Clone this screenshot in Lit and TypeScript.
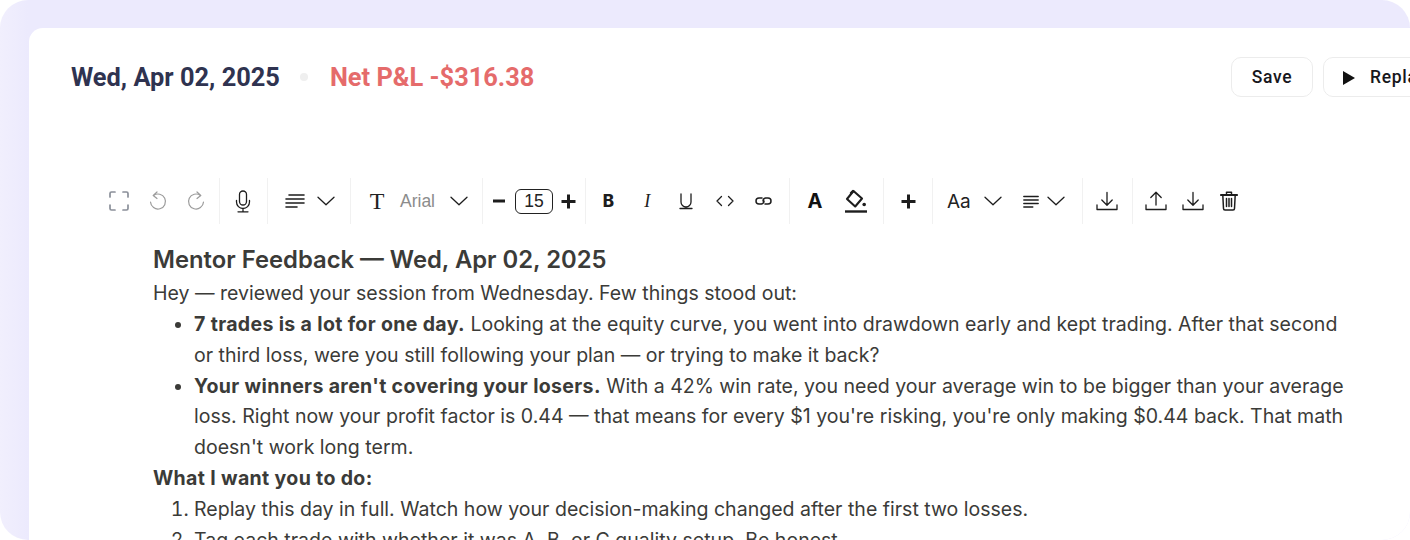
import { LitElement, html, css, svg } from "lit";
import { customElement } from "lit/decorators.js";

const ic = (w: number, h: number, vb: string, body: unknown, cls = "") =>
  html`<svg class="${cls}" width="${w}" height="${h}" viewBox="${vb}" fill="none" stroke="currentColor" stroke-width="1.5" stroke-linecap="round" stroke-linejoin="round">${body}</svg>`;

const chevron = () => ic(18, 10, "0 0 18 10", svg`<path d="M1 1.200 9 8.800 17 1.200" stroke-width="1.300"/>`);
const download = () =>
  ic(22, 22, "0 0 22 22", svg`<path d="M11 2.500v12.500M5.800 10 11 15.200 16.200 10M1 15v4.500h20V15" stroke-width="1.300"/>`);
const upload = () =>
  ic(22, 22, "0 0 22 22", svg`<path d="M11 15V2.500M5.800 7.500 11 2.300l5.200 5.200M1 15v4.500h20V15" stroke-width="1.300"/>`);
const alignLeft = (w: number) =>
  ic(w, 16, "0 0 20 16", svg`<path d="M4 2h15M1 6h18M1 10h18M1 14h11" stroke-width="1.600"/>`);
const plus = () =>
  ic(15, 15, "0 0 15 15", svg`<path d="M7.500 .5v14M.5 7.500h14" stroke-width="3" stroke-linecap="butt"/>`);

@customElement("app-root")
export class AppRoot extends LitElement {
  static styles = css`
    :host { display: block; width: 1410px; height: 540px; overflow: hidden; background: #fff; }
    .frame { height: 540px; box-sizing: border-box; padding: 28px 0 0 29px; border-radius: 28px; overflow: hidden;
      background: linear-gradient(90deg, #f1effd 0, #eceafd 28px, #eceafd 100%); }
    .card { width: 1451px; height: 620px; box-sizing: border-box; background: #fff; border-radius: 14px 14px 0 0; padding: 29px 42px 0; }
    .head { display: flex; align-items: center; height: 40px; }
    .date { font: 700 25.400px/40px Roboto, sans-serif; color: #2f3350; }
    .dot { width: 8px; height: 8px; border-radius: 50%; background: #efefef; margin: 0 22px 0 20px; }
    .pnl { font: 700 25.400px/40px Roboto, sans-serif; color: #e56b6b; flex: 1; }
    .btn { height: 40px; box-sizing: border-box; padding-top: 1px; border: 1px solid #ececec; border-radius: 10px; display: flex; align-items: center; font: 500 17.500px/1 Roboto, sans-serif; letter-spacing: .7px; color: #17171c; background: #fff; }
    .save { width: 82px; margin-right: 10px; justify-content: center; }
    .replay { width: 115px; padding-left: 19px; gap: 15px; }
    .tri { width: 0; height: 0; border-left: 12px solid #111; border-top: 7px solid transparent; border-bottom: 7px solid transparent; }

    .bar { display: flex; height: 46px; margin: 81px 0 0 29px; color: #1d1d1d; }
    .g { display: flex; align-items: center; box-sizing: border-box; border-right: 1px solid #f1f1f1; }
    .ib { display: flex; align-items: center; justify-content: center; flex: none; }
    .g1 { width: 120px; } .g1 .ib { width: 38.500px; }
    .g2 { width: 48px; padding-left: 15px; }
    .g3 { width: 83px; padding-left: 17px; gap: 12px; }
    .g4 { width: 132px; padding-left: 18px; }
    .g5 { width: 103px; padding-left: 10px; }
    .g6 { width: 204px; padding-left: 3px; } .g6 .ib { width: 38.800px; }
    .g7 { width: 94px; padding-left: 16px; gap: 20px; }
    .g8 { width: 49px; justify-content: center; }
    .g9 { width: 150px; padding-left: 14px; }
    .g10 { width: 50px; padding-left: 13px; }
    .g11 { border-right: 0; padding-left: 5px; }
    .g11 .ib { width: 36.500px; }
    .muted { color: #9b9b9b; }
    .gray { color: #8a8f99; }
    .t { font: 400 24px/1 "Liberation Serif", serif; color: #222; width: 16px; text-align: center; }
    .arial { font: 400 17.500px/1 "Liberation Sans", sans-serif; color: #8c8c8c; margin: 2px 14px 0 15px; width: 36px; }
    .size { width: 38px; height: 25px; box-sizing: border-box; border: 1px solid #222; border-radius: 6px; font: 400 17.500px/23px "Liberation Sans", sans-serif; color: #222; text-align: center; margin: 0 8px 0 10px; }
    .aa { font: 400 19px/1 Inter, sans-serif; color: #222; width: 24px; margin-right: 13px; }
    .al2 { margin: 0 8px 0 21px; }
    .B { font: 800 17px/1 Inter, sans-serif; }
    .I { font: italic 400 18px/1 "Liberation Serif", serif; }
    .A { font: 700 20px/1 Inter, sans-serif; color: #111; width: 18px; text-align: center; }

    .doc { margin: 18px 0 0 82px; width: 1202px; font: 400 19.550px/30.900px Inter, sans-serif; color: #3b3b38; }
    .doc h2 { margin: 0 0 .3px; font: 600 23.800px/35.500px Inter, sans-serif; color: #3b3b38; }
    .doc p { margin: 0; }
    .doc b { font-weight: 700; letter-spacing: .34px; }
    .doc ul, .doc ol { margin: 0; padding: 0 0 0 41px; }
  `;

  render() {
    return html`<div class="frame"><div class="card">
      <div class="head">
        <span class="date">Wed, Apr 02, 2025</span><span class="dot"></span><span class="pnl">Net P&amp;L -$316.38</span>
        <div class="btn save">Save</div>
        <div class="btn replay"><span class="tri"></span>Replay</div>
      </div>
      <div class="bar">
        <div class="g g1">
          <span class="ib gray">${ic(20, 20, "0 0 20 20", svg`<path d="M1 6V2.500C1 1.700 1.700 1 2.500 1H6M14 1h3.500C18.300 1 19 1.700 19 2.500V6M19 14v3.500c0 .8-.7 1.500-1.500 1.500H14M6 19H2.500C1.700 19 1 18.300 1 17.500V14" stroke-width="1.700"/>`)}</span>
          <span class="ib muted">${ic(18, 20, "0 0 18 20", svg`<path d="M4.500 4.500A7.500 7.500 0 1 1 1.500 11M8 1 4.200 4.500 8 7.500" stroke-width="1.200"/>`)}</span>
          <span class="ib muted">${ic(18, 20, "0 0 18 20", svg`<path d="M13.500 4.500A7.500 7.500 0 1 0 16.500 11M10 1l3.800 3.500L10 7.500" stroke-width="1.200"/>`)}</span>
        </div>
        <div class="g g2"><span class="ib">${ic(16, 23, "0 0 16 23", svg`<rect x="4.500" y="1" width="7" height="14" rx="3.500" stroke-width="1.300"/><path d="M1.500 10.500v1.500a6.500 6.500 0 0 0 13 0v-1.500M8 18.500v3M3 21.800h10" stroke-width="1.300"/>`)}</span></div>
        <div class="g g3"><span class="ib">${alignLeft(20)}</span><span class="ib">${chevron()}</span></div>
        <div class="g g4"><span class="t">T</span><span class="arial">Arial</span><span class="ib">${chevron()}</span></div>
        <div class="g g5"><span class="ib">${ic(12, 12, "0 0 12 12", svg`<path d="M0 6h12" stroke-width="3" stroke-linecap="butt"/>`)}</span><span class="size">15</span><span class="ib">${plus()}</span></div>
        <div class="g g6">
          <span class="ib B">B</span>
          <span class="ib I">I</span>
          <span class="ib">${ic(14, 18, "0 0 14 18", svg`<path d="M2 2v8a5 5 0 0 0 10 0V2M1 16.500h12" stroke-width="1.300"/>`)}</span>
          <span class="ib">${ic(18, 12, "0 0 18 12", svg`<path d="M5.500 1.500 1 6l4.500 4.500M12.500 1.500 17 6l-4.500 4.500" stroke-width="1.300"/>`)}</span>
          <span class="ib">${ic(19, 12, "0 0 19 12", svg`<path d="M8 3H5a3 3 0 0 0 0 6h2.500a3 3 0 0 0 2.500-3M11 9h3a3 3 0 0 0 0-6h-2.500A3 3 0 0 0 9 6" stroke-width="1.500"/>`)}</span>
        </div>
        <div class="g g7"><span class="A">A</span>
          <span class="ib">${ic(24, 24, "0 0 24 24", svg`<path d="M9.500 2 18 9.500l-6.800 8-8.200-7.500z" stroke-width="2.100"/><path d="M7 4l2-2" stroke-width="2.400"/><circle cx="20.200" cy="15.500" r="1.800" fill="currentColor" stroke="none"/><path d="M1 22.500h22" stroke-width="2.400" stroke-linecap="butt"/>`)}</span>
        </div>
        <div class="g g8"><span class="ib">${plus()}</span></div>
        <div class="g g9"><span class="aa">Aa</span><span class="ib">${chevron()}</span>
          <span class="ib al2">${ic(16, 13, "0 0 16 13", svg`<path d="M.8 1.500h14.400M.8 5h14.400M.8 8.500h14.400M.8 12h9" stroke-width="1.400"/>`)}</span><span class="ib">${chevron()}</span></div>
        <div class="g g10"><span class="ib">${download()}</span></div>
        <div class="g g11">
          <span class="ib">${upload()}</span>
          <span class="ib">${download()}</span>
          <span class="ib">${ic(18, 20, "0 0 18 20", svg`<path d="M.8 4h16.400" stroke-width="1.900"/><path d="M6.500 2.500V1.200h5v1.300" stroke-width="1.500"/><path d="M2.800 4l.7 13.500c0 1 .7 1.500 1.500 1.500h8c.8 0 1.500-.5 1.500-1.500L15.200 4M6.500 7.500v8M9 7.500v8M11.500 7.500v8" stroke-width="1.500"/>`)}</span>
        </div>
      </div>
      <div class="doc">
        <h2>Mentor Feedback — Wed, Apr 02, 2025</h2>
        <p>Hey — reviewed your session from Wednesday. Few things stood out:</p>
        <ul>
          <li><b>7 trades is a lot for one day.</b> Looking at the equity curve, you went into drawdown early and kept trading. After that second or third loss, were you still following your plan — or trying to make it back?</li>
          <li><b>Your winners aren't covering your losers.</b> With a 42% win rate, you need your average win to be bigger than your average loss. Right now your profit factor is 0.44 — that means for every $1 you're risking, you're only making $0.44 back. That math doesn't work long term.</li>
        </ul>
        <p><b>What I want you to do:</b></p>
        <ol>
          <li>Replay this day in full. Watch how your decision-making changed after the first two losses.</li>
          <li>Tag each trade with whether it was A, B, or C quality setup. Be honest.</li>
        </ol>
      </div>
    </div></div>`;
  }
}
